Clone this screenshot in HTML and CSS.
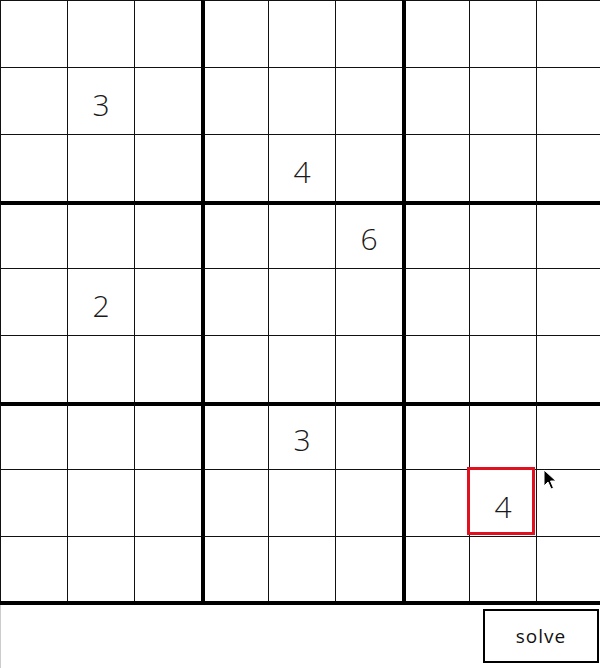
FILE: index.html
```html
<!DOCTYPE html>
<html>
<head>
<meta charset="utf-8">
<link rel="stylesheet" href="styles.css">
</head>
<body>
<div class="app">
  <div class="board">
    <div class="cell"></div><div class="cell"></div><div class="cell"></div><div class="cell tl"></div><div class="cell"></div><div class="cell"></div><div class="cell tl"></div><div class="cell"></div><div class="cell"></div>
    <div class="cell"></div><div class="cell">3</div><div class="cell"></div><div class="cell tl"></div><div class="cell"></div><div class="cell"></div><div class="cell tl"></div><div class="cell"></div><div class="cell"></div>
    <div class="cell"></div><div class="cell"></div><div class="cell"></div><div class="cell tl"></div><div class="cell">4</div><div class="cell"></div><div class="cell tl"></div><div class="cell"></div><div class="cell"></div>
    <div class="cell tt"></div><div class="cell tt"></div><div class="cell tt"></div><div class="cell tt tl"></div><div class="cell tt"></div><div class="cell tt">6</div><div class="cell tt tl"></div><div class="cell tt"></div><div class="cell tt"></div>
    <div class="cell"></div><div class="cell">2</div><div class="cell"></div><div class="cell tl"></div><div class="cell"></div><div class="cell"></div><div class="cell tl"></div><div class="cell"></div><div class="cell"></div>
    <div class="cell"></div><div class="cell"></div><div class="cell"></div><div class="cell tl"></div><div class="cell"></div><div class="cell"></div><div class="cell tl"></div><div class="cell"></div><div class="cell"></div>
    <div class="cell tt"></div><div class="cell tt"></div><div class="cell tt"></div><div class="cell tt tl"></div><div class="cell tt">3</div><div class="cell tt"></div><div class="cell tt tl"></div><div class="cell tt"></div><div class="cell tt"></div>
    <div class="cell"></div><div class="cell"></div><div class="cell"></div><div class="cell tl"></div><div class="cell"></div><div class="cell"></div><div class="cell tl"></div><div class="cell selected">4</div><div class="cell"></div>
    <div class="cell"></div><div class="cell"></div><div class="cell"></div><div class="cell tl"></div><div class="cell"></div><div class="cell"></div><div class="cell tl"></div><div class="cell"></div><div class="cell"></div>
  </div>
  <div class="footer">
    <button class="solve">solve</button>
  </div>
  <svg class="cursor" width="14" height="22" viewBox="0 0 14 22">
    <path d="M1 1 L1 17 L5 13 L8 20 L10.5 19 L7.5 12 L13 12 Z" fill="#000" stroke="#fff" stroke-width="1"/>
  </svg>
</div>
</body>
</html>
```

FILE: styles.css
```css
html, body {
  margin: 0;
  padding: 0;
  background: #fff;
}
.app {
  position: relative;
  width: 600px;
  height: 668px;
  overflow: hidden;
  font-family: "Open Sans", "Liberation Sans", sans-serif;
}
.board {
  width: 600px;
  overflow: hidden;
  display: grid;
  grid-template-columns: repeat(9, 67px);
  grid-template-rows: repeat(8, 67px) 65px;
  border-bottom: 4px solid #000;
}
.cell {
  position: relative;
  box-sizing: border-box;
  border-left: 1px solid #111;
  border-top: 1px solid #111;
  display: flex;
  align-items: center;
  justify-content: center;
  padding-top: 6px;
  font-size: 30px;
  font-weight: 300;
  color: #1a1a1a;
}
.cell.tl {
  border-left: 4px solid #000;
  padding-right: 3px;
}
.cell.tt {
  border-top: 4px solid #000;
  padding-bottom: 3px;
}
.cell.selected::after {
  content: "";
  position: absolute;
  left: -3px;
  top: -3px;
  width: 68px;
  height: 68px;
  box-sizing: border-box;
  border: 3px solid #e0101f;
}
.footer {
  height: 63px;
  border-left: 1px solid #ccc;
  display: flex;
  justify-content: flex-end;
  align-items: flex-start;
  padding: 4px 1px 0 0;
  box-sizing: border-box;
}
.solve {
  width: 116px;
  height: 54px;
  background: #fff;
  border: 2px solid #000;
  font-family: "Open Sans", "Liberation Sans", sans-serif;
  font-size: 19px;
  letter-spacing: 1px;
  color: #111;
  padding: 0;
}
.cursor {
  position: absolute;
  left: 543px;
  top: 469px;
}
```
